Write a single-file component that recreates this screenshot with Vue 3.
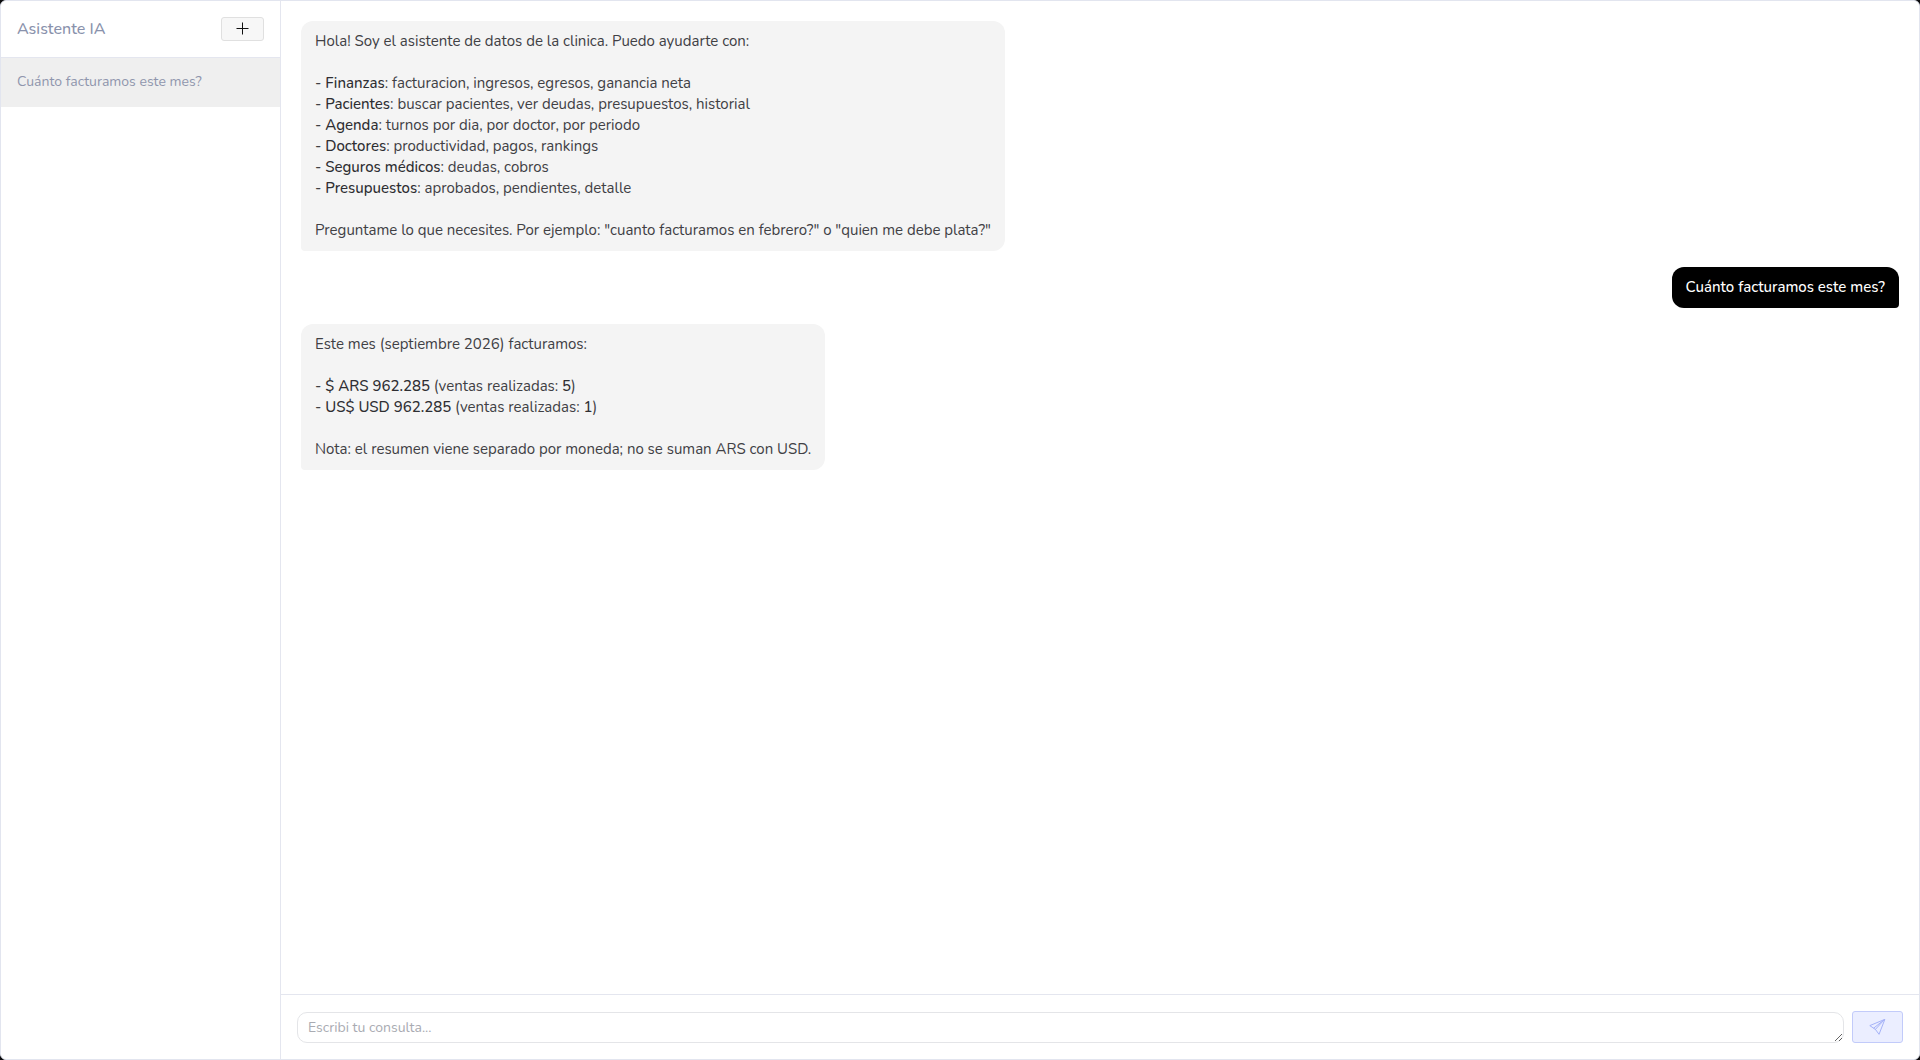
<script setup>
import { ref } from 'vue'

const draft = ref('')

const conversations = [{ id: 1, title: 'Cuánto facturamos este mes?' }]

// Each message is a list of lines; each line is a list of text runs, "b" marks emphasis.
const messages = [
  {
    id: 1,
    from: 'bot',
    lines: [
      [{ t: 'Hola! Soy el asistente de datos de la clinica. Puedo ayudarte con:' }],
      [],
      [{ t: '- ' }, { t: 'Finanzas', b: true }, { t: ': facturacion, ingresos, egresos, ganancia neta' }],
      [{ t: '- ' }, { t: 'Pacientes', b: true }, { t: ': buscar pacientes, ver deudas, presupuestos, historial' }],
      [{ t: '- ' }, { t: 'Agenda', b: true }, { t: ': turnos por dia, por doctor, por periodo' }],
      [{ t: '- ' }, { t: 'Doctores', b: true }, { t: ': productividad, pagos, rankings' }],
      [{ t: '- ' }, { t: 'Seguros médicos', b: true }, { t: ': deudas, cobros' }],
      [{ t: '- ' }, { t: 'Presupuestos', b: true }, { t: ': aprobados, pendientes, detalle' }],
      [],
      [{ t: 'Preguntame lo que necesites. Por ejemplo: "cuanto facturamos en febrero?" o "quien me debe plata?"' }],
    ],
  },
  {
    id: 2,
    from: 'user',
    lines: [[{ t: 'Cuánto facturamos este mes?' }]],
  },
  {
    id: 3,
    from: 'bot',
    lines: [
      [{ t: 'Este mes (septiembre 2026) facturamos:' }],
      [],
      [{ t: '- ' }, { t: '$ ARS 962.285', b: true }, { t: ' (ventas realizadas: ' }, { t: '5', b: true }, { t: ')' }],
      [{ t: '- ' }, { t: 'US$ USD 962.285', b: true }, { t: ' (ventas realizadas: ' }, { t: '1', b: true }, { t: ')' }],
      [],
      [{ t: 'Nota: el resumen viene separado por moneda; no se suman ARS con USD.' }],
    ],
  },
]
</script>

<template>
  <div class="app">
    <aside class="sidebar">
      <header class="sidebar-head">
        <h1 class="title">Asistente IA</h1>
        <button class="new-chat" type="button" aria-label="Nueva conversación">
          <svg width="13" height="14" viewBox="0 0 13 14" fill="none" stroke="currentColor" aria-hidden="true">
            <path d="M6.5 0.5v12M0.5 6.5h12" />
          </svg>
        </button>
      </header>
      <nav>
        <a v-for="c in conversations" :key="c.id" class="conversation" href="#">{{ c.title }}</a>
      </nav>
    </aside>

    <main class="chat">
      <div class="messages">
        <div v-for="m in messages" :key="m.id" class="bubble" :class="m.from">
          <p v-for="(line, i) in m.lines" :key="i" class="line">
            <component :is="run.b ? 'strong' : 'span'" v-for="(run, j) in line" :key="j" :class="{ strong: run.b }">{{ run.t }}</component>
          </p>
        </div>
      </div>

      <form class="composer" @submit.prevent>
        <textarea
          v-model="draft"
          class="field"
          rows="1"
          aria-label="Consulta"
          placeholder="Escribi tu consulta..."
        ></textarea>
        <button class="send" type="submit" aria-label="Enviar" disabled>
          <svg width="17" height="16" viewBox="0 0 17 16" fill="none" stroke="currentColor" stroke-linejoin="round" stroke-linecap="round" aria-hidden="true">
            <path d="M15.5 0.5 0.8 6.6 4.6 9.2 15.5 0.5 6.4 10.4 9.8 15Z" />
            <path d="M4.6 9.2 6.4 10.4" />
          </svg>
        </button>
      </form>
    </main>
  </div>
</template>

<style>
body {
  margin: 0;
  background: #0c0c0e;
}
</style>

<style scoped>
.app {
  display: flex;
  box-sizing: border-box;
  min-height: 100vh;
  border: 1px solid #e2e5ef;
  border-radius: 6px;
  background: #fff;
  font-family: Nunito, "Noto Sans", sans-serif;
  font-size: 15px;
  line-height: 21px;
}

.sidebar {
  flex: none;
  width: 279px;
  border-right: 1px solid #e4e6ef;
}

.sidebar-head {
  display: flex;
  align-items: center;
  justify-content: space-between;
  padding: 16px;
  border-bottom: 1px solid #e4e6ef;
}

.title {
  margin: 0;
  color: #8a92ac;
  font-size: 16px;
  font-weight: 500;
  line-height: 24px;
}

.new-chat {
  display: flex;
  align-items: center;
  justify-content: center;
  box-sizing: border-box;
  width: 43px;
  height: 24px;
  padding: 0;
  border: 1px solid #e0e0e0;
  border-radius: 3px;
  background: #f7f7f7;
  color: #111;
}

.conversation {
  display: block;
  padding: 13px 16px 15px;
  background: #efefef;
  color: #8f96ad;
  font-size: 14px;
  text-decoration: none;
}

.chat {
  display: flex;
  flex: 1;
  flex-direction: column;
  min-width: 0;
}

.messages {
  display: flex;
  flex: 1;
  flex-direction: column;
  gap: 16px;
  padding: 20px;
}

.bubble {
  max-width: 75%;
  padding: 10px 14px;
}

.bot {
  align-self: flex-start;
  border-radius: 12px 12px 12px 4px;
  background: #f4f4f4;
  color: #404044;
}

.user {
  align-self: flex-end;
  border-radius: 12px 12px 4px 12px;
  background: #000;
  color: #fff;
  font-weight: 500;
}

.line {
  min-height: 21px;
  margin: 0;
  white-space: pre-wrap;
}

.strong {
  color: #2e2e32;
  font-weight: 500;
}

.composer {
  display: flex;
  align-items: flex-end;
  gap: 8px;
  padding: 16px;
  border-top: 1px solid #e4e6ef;
}

.field {
  flex: 1;
  box-sizing: border-box;
  height: 31px;
  padding: 4px 10px;
  border: 1px solid #e4e5e8;
  border-radius: 10px;
  background: #fff;
  color: #404044;
  font: inherit;
  font-size: 14px;
  overflow: hidden;
  resize: vertical;
}

.field::placeholder {
  color: #a9abb2;
}

.send {
  display: flex;
  align-items: center;
  justify-content: center;
  box-sizing: border-box;
  width: 51px;
  height: 32px;
  padding: 0;
  border: 1px solid #c2cbfa;
  border-radius: 3px;
  background: #ebeeff;
  color: #a5b2f7;
}
</style>
